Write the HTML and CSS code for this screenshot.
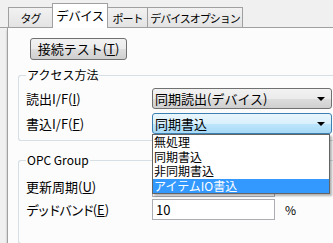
FILE: index.html
```html
<!DOCTYPE html>
<html lang="ja">
<head>
    <meta charset="UTF-8">
    <title>デバイス設定</title>
    <link rel="stylesheet" href="styles.css">
</head>
<body>

    <!-- タブ -->
    <div class="tabs">
        <div class="tab t1">タグ</div>
        <div class="tab t2 active">デバイス</div>
        <div class="tab t3">ポート</div>
        <div class="tab t4">デバイスオプション</div>
    </div>

    <div class="panel">
        <button class="btn">接続テスト(<u>T</u>)</button>

        <fieldset class="group access">
            <legend>アクセス方法</legend>
            <div class="row">
                <label>読出I/F(<u>I</u>)</label>
                <div class="combo"><span>同期読出(デバイス)</span><i class="arrow"></i></div>
            </div>
            <div class="row">
                <label>書込I/F(<u>F</u>)</label>
                <div class="combo focus">
                    <span>同期書込</span><i class="arrow"></i>
                    <!-- 開いたドロップダウン -->
                    <ul class="list">
                        <li>無処理</li>
                        <li>同期書込</li>
                        <li>非同期書込</li>
                        <li class="sel">アイテムIO書込</li>
                    </ul>
                </div>
            </div>
        </fieldset>

        <fieldset class="group opc">
            <legend>OPC Group</legend>
            <div class="row">
                <label>更新周期(<u>U</u>)</label>
                <div class="edit"></div>
            </div>
            <div class="row">
                <label><span class="kana">デッドバンド</span>(<u>E</u>)</label>
                <div class="edit">10</div>
                <span class="unit">%</span>
            </div>
        </fieldset>
    </div>

</body>
</html>
```

FILE: styles.css
```css
body {
    margin: 0;
    background: #f0f0f0;
    font-family: "Noto Sans CJK JP", "Noto Sans", sans-serif;
    font-size: 12px;
    color: #000;
    width: 333px;
    height: 243px;
    overflow: hidden;
}

/* タブ */
.tabs {
    display: flex;
    align-items: flex-end;
    padding: 3px 0 0 8px;
    height: 24px;
    border-bottom: 1px solid #a0a0a0;
}

.tab {
    height: 20px;
    line-height: 20px;
    border: 1px solid #a0a0a0;
    border-bottom: none;
    margin-right: -1px;
    background: linear-gradient(#f2f2f2, #e3e3e3);
    font-size: 11px;
    letter-spacing: -1px;
    text-align: center;
    white-space: nowrap;
    box-sizing: border-box;
}

.t1 { width: 45px; }
.t2 { width: 56px; }
.t3 { width: 41px; }
.t4 { width: 96px; }

.tab.active {
    height: 25px;
    line-height: 24px;
    background: #fff;
    margin-bottom: -1px;
    position: relative;
    z-index: 1;
    font-size: 12.5px;
    letter-spacing: -0.5px;
}

/* タブの中身 */
.panel {
    margin-left: 7px;
    height: 205px;
    background: #fcfcfc;
    border-left: 1px solid #a0a0a0;
    border-bottom: 1px solid #a0a0a0;
    box-shadow: 0 2px 2px rgba(0, 0, 0, 0.25);
    padding-top: 10px;
    overflow: hidden;
}

.btn {
    margin-left: 22px;
    width: 97px;
    height: 22px;
    border: 1px solid #707070;
    border-radius: 3px;
    background: linear-gradient(#f2f2f2 0%, #ebebeb 50%, #dddddd 51%, #cfcfcf 100%);
    font-family: inherit;
    font-size: 13px;
    padding: 0;
    line-height: 18px;
}

/* グループボックス */
.group {
    margin: 0 0 0 10px;
    padding: 6px 0 0 7px;
    border: 1px solid #d5dfe5;
    border-right: none;
    border-radius: 3px 0 0 3px;
}

.group legend {
    padding: 0 1px;
    margin-left: 0;
    font-size: 12px;
    line-height: 14px;
}

.access {
    margin-top: 8px;
    height: 65px;
}

.opc {
    margin-top: 12px;
    padding-top: 9px;
    height: 80px;
}

.row {
    display: flex;
    align-items: center;
    height: 21px;
    margin-bottom: 4px;
}

.opc .row {
    margin-bottom: 2px;
}

.row label {
    width: 126px;
    font-size: 13px;
}

.kana {
    letter-spacing: -2px;
}

/* コンボボックス */
.combo {
    position: relative;
    width: 176px;
    height: 19px;
    border: 1px solid #707070;
    border-radius: 3px;
    background: linear-gradient(#f2f2f2 0%, #ebebeb 50%, #dddddd 51%, #cfcfcf 100%);
    display: flex;
    align-items: center;
    padding-left: 2px;
    font-size: 13px;
}

.combo span {
    flex: 1;
}

.combo.focus {
    border-color: #3c7fb1;
    background: linear-gradient(#eaf6fd 0%, #d9f0fc 50%, #bee6fd 51%, #a7d9f5 100%);
}

.arrow {
    width: 0;
    height: 0;
    border-left: 4px solid transparent;
    border-right: 4px solid transparent;
    border-top: 4px solid #000;
    margin-right: 6px;
}

.list {
    position: absolute;
    top: 20px;
    left: -1px;
    width: 176px;
    margin: 0;
    padding: 0;
    list-style: none;
    background: #fff;
    border: 1px solid #646464;
    box-shadow: 2px 2px 2px rgba(0, 0, 0, 0.3);
    z-index: 5;
    font-size: 12px;
}

.list li {
    height: 14.5px;
    line-height: 14.5px;
    padding-left: 1px;
}

.list li.sel {
    background: #3399ff;
    color: #fff;
}

/* テキストボックス */
.edit {
    width: 118px;
    height: 19px;
    border: 1px solid #abadb3;
    background: #fff;
    line-height: 19px;
    padding-left: 3px;
    font-size: 13px;
}

.unit {
    margin-left: 10px;
    font-size: 12px;
}
```
